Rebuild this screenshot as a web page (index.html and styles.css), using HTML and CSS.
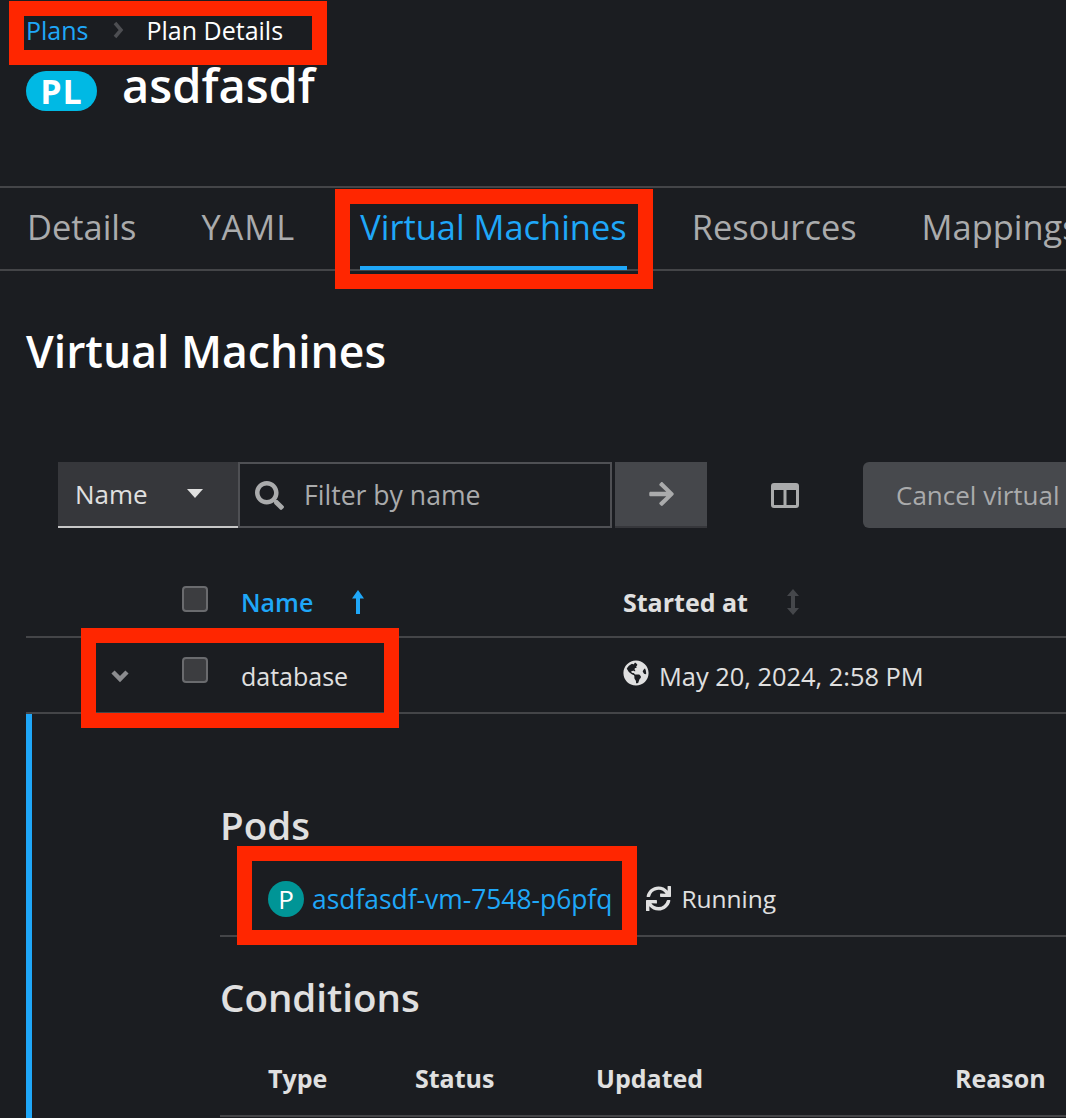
FILE: index.html
```html
<!DOCTYPE html>
<html lang="en">
<head>
    <meta charset="UTF-8">
    <title>Plan Details</title>
    <link rel="stylesheet" href="styles.css">
</head>
<body>
    <div class="page">
        <nav class="breadcrumb">
            <a class="link">Plans</a>
            <svg class="crumb-sep" viewBox="0 0 12 20"><polyline points="3,3 9,10 3,17"/></svg>
            <span>Plan Details</span>
        </nav>

        <div class="title-row">
            <span class="badge">PL</span>
            <h1>asdfasdf</h1>
        </div>

        <div class="tabs">
            <span class="tab">Details</span>
            <span class="tab tab-yaml">YAML</span>
            <span class="tab active">Virtual Machines</span>
            <span class="tab">Resources</span>
            <span class="tab">Mappings</span>
        </div>

        <h2 class="section-title">Virtual Machines</h2>

        <div class="toolbar">
            <div class="select">
                <span>Name</span>
                <svg class="caret" viewBox="0 0 16 10"><polygon points="0,0 16,0 8,9"/></svg>
            </div>
            <div class="search">
                <svg class="search-icon" viewBox="0 0 512 512"><path d="M505 442.7L405.3 343c-4.5-4.5-10.6-7-17-7H372c27.6-35.3 44-79.7 44-128C416 93.1 322.9 0 208 0S0 93.1 0 208s93.1 208 208 208c48.3 0 92.7-16.4 128-44v16.3c0 6.4 2.5 12.5 7 17l99.7 99.7c9.4 9.4 24.6 9.4 33.9 0l28.3-28.3c9.4-9.4 9.4-24.6.1-34zM208 336c-70.7 0-128-57.2-128-128 0-70.7 57.2-128 128-128 70.7 0 128 57.2 128 128 0 70.7-57.2 128-128 128z"/></svg>
                <span>Filter by name</span>
            </div>
            <div class="arrow-btn">
                <svg viewBox="0 0 448 512"><path d="M190.5 66.9l22.2-22.2c9.4-9.4 24.6-9.4 33.9 0L441 239c9.4 9.4 9.4 24.6 0 33.9L246.6 467.3c-9.4 9.4-24.6 9.4-33.9 0l-22.2-22.2c-9.5-9.5-9.3-25 .4-34.3L311.4 296H24c-13.3 0-24-10.7-24-24v-32c0-13.3 10.7-24 24-24h287.4L190.9 101.2c-9.8-9.3-10-24.8-.4-34.3z"/></svg>
            </div>
            <svg class="columns-icon" viewBox="0 0 28 25"><path fill-rule="evenodd" d="M3 0h22a3 3 0 0 1 3 3v19a3 3 0 0 1-3 3H3a3 3 0 0 1-3-3V3a3 3 0 0 1 3-3zM3 7v15h9.500V7zM15.500 7v15H25V7z"/></svg>
            <div class="cancel-btn">Cancel virtual machines</div>
        </div>

        <div class="vm-head">
            <span></span>
            <span class="checkbox head-check"></span>
            <span class="sort-name">Name
                <svg class="sort-up" viewBox="0 0 14 24"><path d="M7 0l6 8.500H9V24H5V8.500H1z"/></svg>
            </span>
            <span class="sort-date">Started at
                <svg class="sort-both" viewBox="0 0 14 26"><path d="M7 0l6 7H9v12h4l-6 7-6-7h4V7H1z"/></svg>
            </span>
        </div>

        <div class="vm-row">
            <svg class="chevron" viewBox="0 0 20 14"><polyline points="3,3 10,10 17,3"/></svg>
            <span class="checkbox row-check"></span>
            <span>database</span>
            <span class="started">
                <svg class="globe" viewBox="0 0 496 512"><path d="M248 8C111.03 8 0 119.03 0 256s111.03 248 248 248 248-111.03 248-248S384.97 8 248 8zm82.29 357.6c-3.9 3.88-7.99 7.95-11.31 11.28-2.99 3-5.1 6.7-6.17 10.71-1.51 5.66-2.73 11.38-4.77 16.87l-17.39 46.85c-13.76 3-28 4.69-42.65 4.69v-27.38c1.69-12.62-7.64-36.26-22.63-51.25-6-6-9.37-14.14-9.37-22.63v-32.01c0-11.64-6.27-22.34-16.46-27.97-14.37-7.95-34.81-19.06-48.81-26.11-11.48-5.78-22.1-13.14-31.65-21.75l-.8-.72a114.792 114.792 0 0 1-18.06-20.74c-9.38-13.77-24.66-36.42-34.59-51.14 20.47-45.5 57.36-82.04 103.2-101.89l24.01 12.01C203.48 89.74 216 82.01 216 70.11v-11.3c7.99-1.29 16.12-2.11 24.39-2.42l28.3 28.3c6.25 6.25 6.25 16.38 0 22.63L264 112l-10.34 10.34c-3.12 3.12-3.12 8.19 0 11.31l4.69 4.69c3.12 3.12 3.12 8.19 0 11.31l-8 8a8.008 8.008 0 0 1-5.66 2.34h-8.99c-2.08 0-4.08.81-5.58 2.27l-9.92 9.65a8.008 8.008 0 0 0-1.58 9.31l15.59 31.19c2.66 5.32-1.21 11.58-7.15 11.58h-5.64c-1.93 0-3.79-.7-5.24-1.96l-9.28-8.06a16.017 16.017 0 0 0-15.55-3.1l-31.17 10.39a11.95 11.95 0 0 0-8.17 11.34c0 4.53 2.56 8.66 6.61 10.69l11.08 5.54c9.41 4.71 19.79 7.16 30.31 7.16s22.59 27.29 32 32h66.75c8.49 0 16.62 3.37 22.63 9.37l13.69 13.69a30.503 30.503 0 0 1 8.93 21.57 46.536 46.536 0 0 1-13.72 32.98zM417 274.25c-5.79-1.45-10.84-5-14.15-9.97l-17.98-26.97a23.97 23.97 0 0 1 0-26.62l19.59-29.38c2.32-3.47 5.5-6.29 9.24-8.15l12.98-6.49C440.2 193.59 448 223.87 448 256c0 8.67-.74 17.16-1.82 25.54L417 274.25z"/></svg>
                May 20, 2024, 2:58 PM
            </span>
        </div>

        <div class="expanded">
            <h3 class="pods-title">Pods</h3>
            <div class="pod-row">
                <span class="pod-icon">P</span>
                <a class="link pod-link">asdfasdf-vm-7548-p6pfq</a>
                <svg class="sync" viewBox="0 0 512 512"><path d="M440.65 12.57l4 82.77A247.16 247.16 0 0 0 255.83 8C134.73 8 33.91 94.92 12.29 209.82A12 12 0 0 0 24.09 224h49.05a12 12 0 0 0 11.67-9.26 175.91 175.91 0 0 1 317-56.94l-101.46-4.86a12 12 0 0 0-12.57 12v47.41a12 12 0 0 0 12 12H500a12 12 0 0 0 12-12V12a12 12 0 0 0-12-12h-47.37a12 12 0 0 0-11.98 12.57zM255.83 432a175.61 175.61 0 0 1-146-77.8l101.8 4.87a12 12 0 0 0 12.57-12v-47.4a12 12 0 0 0-12-12H12a12 12 0 0 0-12 12V500a12 12 0 0 0 12 12h47.35a12 12 0 0 0 12-12.6l-4.15-82.57A247.17 247.17 0 0 0 255.83 504c121.11 0 221.93-86.92 243.55-201.82a12 12 0 0 0-11.8-14.18h-49.05a12 12 0 0 0-11.67 9.26A175.86 175.86 0 0 1 255.83 432z"/></svg>
                <span>Running</span>
            </div>
            <h3 class="conditions-title">Conditions</h3>
            <div class="conditions-head">
                <span>Type</span>
                <span>Status</span>
                <span>Updated</span>
                <span>Reason</span>
            </div>
        </div>

        <!-- annotation boxes drawn on top of the screenshot -->
        <div class="mark mark-crumb"></div>
        <div class="mark mark-tab"></div>
        <div class="mark mark-row"></div>
        <div class="mark mark-pod"></div>
    </div>
</body>
</html>
```

FILE: styles.css
```css
* {
    margin: 0;
    padding: 0;
    box-sizing: border-box;
}

html, body {
    height: 100%;
    overflow: hidden;
    background: #1b1d21;
}

body {
    font-family: 'Open Sans', 'Noto Sans', sans-serif;
    color: #e0e0e0;
}

.page {
    position: relative;
    height: 1118px;
    overflow: hidden;
}

.link {
    color: #1fa7f8;
}

.breadcrumb {
    display: flex;
    align-items: center;
    height: 34px;
    margin-top: 13px;
    padding-left: 26px;
    font-size: 25px;
    color: #fff;
}

.crumb-sep {
    width: 12px;
    height: 20px;
    margin: 0 23px 0 23px;
    fill: none;
    stroke: #4d4e52;
    stroke-width: 3.5;
}

.title-row {
    display: flex;
    align-items: center;
    gap: 25px;
    height: 62px;
    margin-top: 13px;
    padding-left: 26px;
}

.badge {
    width: 71px;
    height: 40px;
    border-radius: 20px;
    background: #00b9e4;
    color: #fff;
    font-size: 34px;
    font-weight: 700;
    letter-spacing: 1px;
    line-height: 40px;
    text-align: center;
}

h1 {
    margin-top: -12px;
    font-size: 47px;
    font-weight: 600;
    line-height: 62px;
    color: #fff;
}

.tabs {
    display: flex;
    gap: 65px;
    height: 85px;
    margin-top: 64px;
    padding-left: 27px;
    border-top: 2px solid #444548;
    border-bottom: 2px solid #444548;
    font-size: 34.4px;
    color: #aaabac;
    white-space: nowrap;
}

.tab {
    display: flex;
    align-items: center;
    height: 82px;
    padding-bottom: 2px;
    border-bottom: 4px solid transparent;
}

.tab-yaml {
    letter-spacing: 1px;
}

.tab.active {
    color: #1fa7f8;
    border-bottom-color: #1fa7f8;
}

.section-title {
    margin-top: 49px;
    font-size: 44.5px;
    font-weight: 600;
    line-height: 62px;
    padding-left: 26px;
    color: #fff;
}

.toolbar {
    display: flex;
    align-items: stretch;
    height: 66px;
    margin-top: 80px;
    padding-left: 58px;
    font-size: 26px;
    white-space: nowrap;
}

.select {
    flex-shrink: 0;
    display: flex;
    align-items: center;
    justify-content: space-between;
    width: 180px;
    padding: 0 35px 0 17px;
    background: #36373b;
    border-bottom: 2px solid #c7c7c7;
}

.caret {
    width: 16px;
    height: 10px;
    fill: #e0e0e0;
}

.search {
    flex-shrink: 0;
    display: flex;
    align-items: center;
    gap: 20px;
    width: 374px;
    padding-left: 15px;
    border: 2px solid #4f5054;
    font-size: 26.6px;
    color: #aaabac;
}

.search-icon {
    width: 29px;
    height: 29px;
    fill: #aaabac;
}

.arrow-btn {
    flex-shrink: 0;
    display: flex;
    align-items: center;
    justify-content: center;
    width: 92px;
    margin-left: 3px;
    background: #45474b;
    border-bottom: 2px solid #36373b;
}

.arrow-btn svg {
    width: 25px;
    height: 28px;
    fill: #aaabac;
}

.columns-icon {
    flex-shrink: 0;
    align-self: center;
    width: 28px;
    height: 25px;
    margin: 0 64px;
    fill: #aaabac;
}

.cancel-btn {
    flex-shrink: 0;
    display: flex;
    align-items: center;
    padding: 0 33px;
    border-radius: 6px;
    background: #47494d;
    color: #aaabac;
}

.vm-head, .vm-row {
    display: grid;
    grid-template-columns: 156px 59px 382px 1fr;
    align-items: center;
    margin-left: 26px;
    font-size: 25px;
    white-space: nowrap;
}

.vm-head {
    height: 110px;
    padding-top: 39px;
    border-bottom: 2px solid #444548;
    font-weight: 700;
}

.vm-row {
    height: 76px;
    padding-top: 2px;
    border-bottom: 2px solid #444548;
}

.checkbox {
    width: 26px;
    height: 26px;
    border: 2px solid #6a6b6e;
    border-radius: 4px;
    background: #3c3d40;
}

.head-check {
    margin-top: -6px;
}

.row-check {
    margin-top: -12px;
}

.sort-name {
    display: flex;
    align-items: center;
    gap: 38px;
    font-weight: 600;
    color: #1fa7f8;
}

.sort-up {
    width: 14px;
    height: 24px;
    fill: #1fa7f8;
}

.sort-date {
    display: flex;
    align-items: center;
    gap: 38px;
}

.sort-both {
    width: 14px;
    height: 26px;
    fill: #45474b;
}

.chevron {
    width: 20px;
    height: 14px;
    margin-left: 84px;
    fill: none;
    stroke: #8b8c8f;
    stroke-width: 4.5;
}

.started {
    display: flex;
    align-items: center;
    gap: 10px;
    font-size: 25.4px;
}

.globe {
    width: 26px;
    height: 26px;
    margin-top: -6px;
    fill: #e0e0e0;
}

.expanded {
    height: 404px;
    margin-left: 26px;
    padding: 84px 0 0 188px;
    border-left: 6px solid #1fa7f8;
}

.pods-title, .conditions-title {
    font-size: 38.5px;
    font-weight: 600;
    line-height: 54px;
}

.pod-row {
    display: flex;
    align-items: center;
    height: 85px;
    padding: 10px 0 0 48px;
    border-bottom: 2px solid #444548;
    font-size: 24.5px;
}

.pod-icon {
    width: 36px;
    height: 36px;
    margin-right: 8px;
    border-radius: 50%;
    background: #009596;
    color: #fff;
    font-size: 26px;
    line-height: 36px;
    text-align: center;
}

.pod-link {
    font-size: 26.4px;
}

.sync {
    width: 25px;
    height: 25px;
    margin: 0 10px 0 34px;
    fill: #e0e0e0;
}

.conditions-title {
    margin-top: 33px;
}

.conditions-head {
    display: grid;
    grid-template-columns: 147px 181px 359px 1fr;
    align-items: center;
    height: 93px;
    padding: 17px 0 0 48px;
    border-bottom: 2px solid #444548;
    font-size: 25px;
    font-weight: 700;
    white-space: nowrap;
}

.mark {
    position: absolute;
    border: 15px solid #ff2600;
}

.mark-crumb {
    left: 9px;
    top: 1px;
    width: 318px;
    height: 64px;
}

.mark-tab {
    left: 335px;
    top: 189px;
    width: 318px;
    height: 100px;
}

.mark-row {
    left: 81px;
    top: 628px;
    width: 318px;
    height: 100px;
}

.mark-pod {
    left: 237px;
    top: 846px;
    width: 400px;
    height: 99px;
}
```
